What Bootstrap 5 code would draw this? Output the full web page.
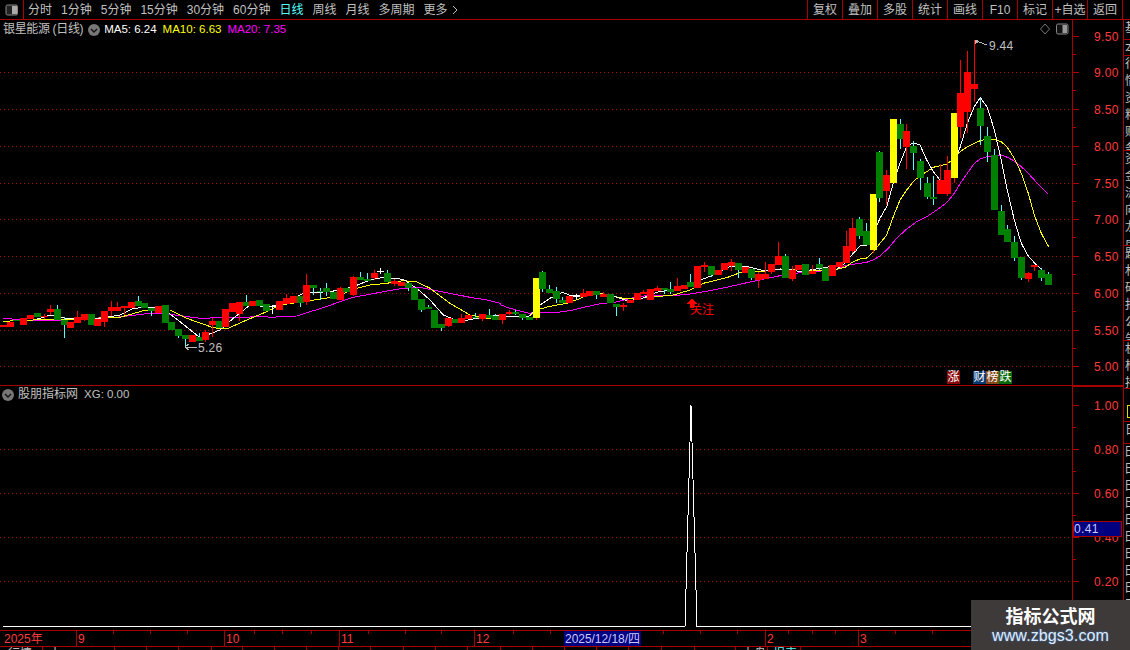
<!doctype html>
<html lang="zh">
<head>
<meta charset="utf-8">
<title>银星能源 日线</title>
<link href="https://cdn.jsdelivr.net/npm/bootstrap@5.3.0/dist/css/bootstrap.min.css" rel="stylesheet">
<style>
:root{--tdx-red:#a80000;--tdx-text:#c0c0c0;}
html,body{background:#000;}
body{width:1130px;height:650px;overflow:hidden;font:12px/1 "Liberation Sans","Noto Sans CJK SC",sans-serif;color:var(--tdx-text);}
.shell{width:1130px;height:650px;overflow:hidden;}
.topbar{height:20px;border-bottom:1px solid var(--tdx-red);flex:none;}
.win-btn{width:24px;height:19px;border-right:1px solid var(--tdx-red);flex:none;}
.tabs{padding-left:4px;gap:9px;line-height:20px;white-space:nowrap;}
.tabs span.on{color:#54ffff;}
.more-ico{margin-left:4px;vertical-align:-1px;}
.tools{margin-left:auto;line-height:20px;}
.tools span{display:block;width:35px;text-align:center;border-left:1px solid var(--tdx-red);white-space:nowrap;}
.tools span:last-child{width:36px;border-right:1px solid var(--tdx-red);}
.tools-end{width:7px;flex:none;}
.body-row{height:610px;flex:none;}
.plots{width:1072px;flex:none;}
.pane-up{height:366px;border-bottom:1px solid var(--tdx-red);flex:none;}
.pane-low{height:244px;flex:none;}
.plots svg,.axes svg,.timeline svg{display:block;}
.crisp{shape-rendering:crispEdges;}
.legend{left:3px;top:3px;gap:6px;line-height:13px;white-space:nowrap;font-size:11.5px;}
.legend .cn{font-size:12px;}
.legend .ti{letter-spacing:-.35px;margin-right:-1px;}
.legend .dot-ico{margin-right:-2px;}
.legend-low{left:2px;top:2px;gap:4px;}
.legend-low .dot-ico{margin-right:0;}
.legend-low .cn{margin-right:2px;}
.dot-ico{width:12px;height:12px;flex:none;}
.c-w{color:#fff}.c-y{color:#ff0}.c-m{color:#f0f}
.corner{right:3px;top:3px;gap:6px;}
.tagrow{left:947px;top:351px;}
.tagcell{width:13px;height:13px;line-height:13px;text-align:center;color:#fff;font-size:12px;}
.t-red{background:#8a0a0a}.t-blue{background:#0c3b72;margin-left:13px}.t-brown{background:#85491b}.t-green{background:#0a6a0a}
.axes{width:51px;flex:none;border-left:1px solid var(--tdx-red);}
.axis-up{height:366px;border-bottom:1px solid var(--tdx-red);flex:none;}
.axis-low{height:244px;border-top:2px solid var(--tdx-red);border-left:1px solid var(--tdx-red);margin-left:-1px;margin-top:-1px;flex:none;}
.side{width:7px;flex:none;border-left:1px solid var(--tdx-red);overflow:hidden;}
.side-block{overflow:hidden;border-bottom:1px solid var(--tdx-red);line-height:17px;padding-left:1px;width:14px;word-break:break-all;}
.s20{height:20px}.s6{height:6px}.s97{height:97px}.s32{height:17px}
.s49{height:49px}.s24{height:24px;border-top:1px solid var(--tdx-red)}.s190{height:190px;border:0}
.side-yel{width:12px;height:13px;border:1px solid #dd0;margin:16px 0 3px 3px;flex:none;}
.timeline{height:17px;flex:none;border-top:1px solid var(--tdx-red);border-bottom:1px solid var(--tdx-red);}
.strip{height:3px;overflow:hidden;flex:none;line-height:14px;white-space:nowrap;}
.strip span{display:block;height:3px;border-right:1px solid var(--tdx-red);flex:none;}
.w32{width:32px}.w33{width:33px}.w31{width:31px}.w41{width:41px}
.w43{width:43px;padding-left:8px}.w72{width:72px;padding-left:6px}.p5{padding-left:5px}.p6{padding-left:6px}
.cy{color:#54ffff;}
.mark-note{left:690px;top:283px;color:#f00;line-height:14px;}
.brand{right:0;bottom:0;width:159px;height:50px;background:#3f3a3a;z-index:5;}
.brand-a{font-size:18px;font-weight:700;color:#fff;line-height:22px;margin-top:6px;}
.brand-b{font-size:16px;color:#dfeaf7;line-height:18px;letter-spacing:.1px;margin-top:-1px;text-shadow:0 0 2px #3d7fd0;}
</style>
</head>
<body>
<div class="shell d-flex flex-column position-relative">
  <div class="topbar d-flex align-items-stretch">
    <div class="win-btn d-flex align-items-center justify-content-center">
      <svg width="14" height="12" viewBox="0 0 14 12"><rect x="1" y="1" width="11.5" height="10" rx="1.5" fill="#222" stroke="#888"/><rect x="7" y="2" width="5" height="8" fill="#aaa"/></svg>
    </div>
    <div class="tabs d-flex">
      <span>分时</span><span>1分钟</span><span>5分钟</span><span>15分钟</span><span>30分钟</span><span>60分钟</span><span class="on">日线</span><span>周线</span><span>月线</span><span>多周期</span><span>更多<svg class="more-ico" width="6" height="10" viewBox="0 0 6 10"><path d="M1 1l4 4-4 4" fill="none" stroke="#c0c0c0"/></svg></span>
    </div>
    <div class="tools d-flex">
      <span>复权</span><span>叠加</span><span>多股</span><span>统计</span><span>画线</span><span>F10</span><span>标记</span><span>+自选</span><span>返回</span>
    </div>
    <div class="tools-end"></div>
  </div>

  <div class="body-row d-flex">
    <div class="plots d-flex flex-column">
      <div class="pane-up position-relative">
        <svg id="up" class="crisp" width="1072" height="365"></svg>
        <div class="legend position-absolute d-flex align-items-center">
          <span class="cn ti">银星能源 (日线)</span>
          <svg class="dot-ico" viewBox="0 0 12 12"><circle cx="6" cy="6" r="6" fill="#777"/><path d="M3 5l3 3 3-3" fill="none" stroke="#111" stroke-width="1.4"/></svg>
          <span class="c-w">MA5: 6.24</span><span class="c-y">MA10: 6.63</span><span class="c-m">MA20: 7.35</span>
        </div>
        <div class="corner position-absolute d-flex align-items-center">
          <svg width="10" height="12" viewBox="0 0 10 12"><path d="M5 1l4.500 5-4.500 5-4.500-5z" fill="none" stroke="#777"/></svg>
          <svg width="13" height="12" viewBox="0 0 13 12"><rect x=".5" y="1" width="11.500" height="10" rx="1.500" fill="#111" stroke="#888"/><rect x="6.500" y="2" width="4.500" height="8" fill="#999"/></svg>
        </div>
        <div class="tagrow position-absolute d-flex">
          <div class="tagcell t-red">涨</div><div class="tagcell t-blue">财</div><div class="tagcell t-brown">榜</div><div class="tagcell t-green">跌</div>
        </div>
        <div class="mark-note position-absolute">关注</div>
      </div>
      <div class="pane-low position-relative">
        <svg id="low" class="crisp" width="1072" height="244"></svg>
        <div class="legend legend-low position-absolute d-flex align-items-center">
          <svg class="dot-ico" viewBox="0 0 12 12"><circle cx="6" cy="6" r="6" fill="#777"/><path d="M3 5l3 3 3-3" fill="none" stroke="#111" stroke-width="1.4"/></svg>
          <span class="cn">股朋指标网</span><span>XG: 0.00</span>
        </div>
      </div>
    </div>
    <div class="axes d-flex flex-column">
      <div class="axis-up"><svg id="axu" width="50" height="365"></svg></div>
      <div class="axis-low"><svg id="axl" width="50" height="242"></svg></div>
    </div>
    <div class="side d-flex flex-column">
      <div class="side-block s20">基</div>
      <div class="side-block s32">本</div>
      <div class="side-block s97">行情资料财务</div>
      <div class="side-block s97">资金流向龙虎</div>
      <div class="side-block s97">题材研报公告</div>
      <div class="side-block s49">机构持股</div>
      <div class="side-yel"></div>
      <div class="side-block s24">日</div>
      <div class="side-block s190">田田田田田田田田田田田</div>
    </div>
  </div>

  <div class="timeline"><svg id="tm" width="1130" height="15"></svg></div>
  <div class="strip d-flex">
    <span class="w43">行情</span><span class="w72">十</span>
    <span class="w32"></span><span class="w32"></span><span class="w33"></span><span class="w31"></span><span class="w32"></span><span class="w32"></span><span class="w32"></span><span class="w32"></span><span class="w33"></span><span class="w32"></span><span class="w32"></span><span class="w33"></span><span class="w32"></span><span class="w32"></span><span class="w32"></span><span class="w32"></span><span class="w33"></span><span class="w33"></span>
    <span class="w41"></span><span class="w32 p6">大盘</span><span class="w33 p5 cy">报表</span>
  </div>

  <div class="brand position-absolute text-center">
    <div class="brand-a">指标公式网</div>
    <div class="brand-b">www.zbgs3.com</div>
  </div>
</div>

<script src="https://cdn.jsdelivr.net/npm/bootstrap@5.3.0/dist/js/bootstrap.bundle.min.js"></script>
<script>
var RED='#ff0000',GRN='#008000',YEL='#ffff00',CY='#54ffff',AX='#ff3a3a',LN='#a80000';
var up='',low='',Y0=20;
function rect(x,y,w,h,c){return '<rect x="'+x+'" y="'+y+'" width="'+w+'" height="'+h+'" fill="'+c+'"/>';}
function dots(y){var s='';for(var x=0;x<1072;x+=4){s+=rect(x,y,1,1,LN);}return s;}
[72,109,146,183,219,256,293,330,366].forEach(function(y){up+=dots(y-Y0);});
var C=[];
function add(ox,oy,s){s.trim().split(/\s*;\s*/).forEach(function(r){if(!r)return;var a=r.trim().split(/\s+/);
 var t=+a[2],b=+a[3],wt=a[4]?+a[4]:t,wb=a[5]?+a[5]:b;
 C.push({x:ox+a[0]/3,c:a[1],t:oy+t/3,b:oy+b/3,wt:oy+wt/3,wb:oy+wb/3});});}
add(0,260,"10 r 196 203;31 r 186 201;50 g 181 184;70 r 175 195;91 r 165 178;112 g 159 170;133 r 168 171 162 176;151 r 148 156 135 165;172 g 147 180 135 180;193 g 180 195 170 233;211 r 186 204;232 r 171 190 153 190;253 r 162 180 162 184;274 g 162 195;292 r 177 198;313 r 153 186 153 201;335 r 141 153 124 168;353 r 141 153 126 153;374 r 138 143 138 165;394 r 126 143;415 g 123 138 108 138;433 g 129 144;455 g 144 153 144 168;475 r 138 159;497 g 135 189;515 g 186 210;536 g 207 228 207 234;557 g 225 237 225 264;578 r 226 246;598 g 231 243 220 243;616 r 216 240 210 246;637 r 183 195 174 231;657 g 183 204;677 r 147 201;697 r 129 156;718 r 126 162 126 183;739 g 126 138 105 138;757 r 123 138;778 g 120 138;799 g 132 153");
add(270,260,"7 w 139 141 137 160;28 r 123 150;49 r 114 132 102 132;70 r 108 129;91 g 108 129 108 141;110 r 75 126 42 135;130 g 75 84 75 105;151 g 94 97 84 120;170 g 84 96 69 108;190 g 96 117;211 r 84 120 81 120;230 g 84 96;250 r 51 105 48 108;271 g 51 60 36 60;292 g 57 63 39 63;313 r 39 54 30 60;332 w 33 36 24 42;352 g 39 66 30 66;373 r 63 71 56 78;394 r 66 78;415 g 69 84 69 93;433 g 84 120;454 g 117 150 117 155;475 g 141 147 135 147;494 g 150 204;515 g 192 204 192 213;536 r 174 198 174 201;555 g 177 189;574 r 174 189 162 189;595 r 165 177;616 g 171 174 160 178;637 r 162 177 162 183;657 g 165 174 147 174;677 g 168 180 162 180");
add(500,230,"7 r 252 270 252 282;28 r 246 252 240 255;46 g 246 252 240 255;67 g 252 264 252 270;88 g 261 270;109 y 144 264 144 270;127 g 126 177 123 185;148 g 177 189 165 189;169 g 183 207 171 219;187 g 210 220 201 220;208 r 198 219;229 w 198 200 192 210;250 r 189 201 177 201;268 r 183 198;289 g 183 195 183 207;310 r 192 201 186 201;331 g 192 219;349 g 222 231 222 258;370 r 225 231 219 243;391 r 210 219;412 r 189 210;431 r 186 192 180 192;451 r 177 210;472 r 174 183 168 183;493 g 174 180 174 192;511 g 177 186 156 192;532 r 168 183 144 183;553 r 165 177;572 g 156 171 132 171;592 r 108 174;613 r 105 111 96 126;634 g 108 135 108 141;655 r 120 135;673 r 99 120;694 r 96 108 87 123;715 g 99 120 99 144;736 r 111 129;755 g 117 144 117 150;776 r 132 150 126 174;797 r 132 147 96 147;815 r 102 126 102 132;836 r 78 105 36 105;856 g 78 144 72 144;877 r 120 147 108 153;895 r 105 120;916 g 102 135;937 r 123 132 105 132;958 g 102 114 84 120;977 g 114 153");
add(830,30,"8 r 705 738;28 r 696 711;49 r 648 699 603 699;67 r 594 663 564 669;88 g 567 618 561 627;109 g 603 645 579 645;130 y 492 660 492 669;148 g 366 504 363 516;169 r 435 483 420 525;190 y 267 459;211 g 282 327 267 357;229 r 303 351 282 417;250 g 348 369 333 420;271 g 393 444 387 480;292 g 459 501 441 507;310 g 501 507 438 525;331 r 450 492 402 492;352 r 420 492 378 498;373 y 249 444 249 459;391 r 189 291 90 324;412 r 126 246 63 309;433 r 162 177 30 216;451 g 234 288 204 345;472 g 318 366 291 396;493 g 375 540 357 540;514 g 543 615 525 615;532 g 597 636 585 636;553 g 636 684 618 693;574 g 681 744 681 750;595 r 729 747 726 756;613 r 705 711 705 723;634 g 720 744 714 753;655 g 732 765 726 765");
function pts(ox,oy,s){return s.trim().split(/\s+/).map(function(p){var a=p.split(',');return (ox+a[0]/3).toFixed(1)+','+(oy+a[1]/3-Y0).toFixed(1);}).join(' ');}
var mag=[pts(0,260,"10,175 100,182 200,180 270,175 350,172 450,160 510,163 600,175 700,172 800,170"),
 pts(270,260,"0,172 40,170 80,168 110,158 160,143 210,125 250,112 300,103 350,93 400,85 450,82 500,92 550,102 600,112 650,120 690,130"),
 pts(500,230,"0,224 30,235 60,243 88,250 109,247 175,247 215,241 260,230 300,221 345,217 400,203 445,196 530,196 570,192 620,184 680,172 750,156 840,137 900,128 990,121"),
 pts(830,30,"20,718 45,707 70,703 110,697 130,690 150,678 175,655 200,625 230,597 260,575 290,560 320,540 350,518 373,490 391,460 412,430 433,400 451,387 472,380 493,377 514,375 532,382 553,393 574,410 595,430 613,450 634,472 653,491")].join(' ');
var yel=[pts(0,260,"10,184 100,180 200,178 270,175 360,172 430,152 510,150 560,175 640,203 680,207 740,180 800,155"),
 pts(270,260,"0,150 30,135 100,125 150,117 200,110 250,88 300,75 350,70 400,62 440,65 480,85 540,130 600,165 650,175 690,172"),
 pts(500,230,"0,258 88,258 109,240 150,229 200,220 240,206 270,190 300,190 345,200 370,205 420,205 470,200 520,195 570,180 610,160 680,143 720,128 780,125 840,117 900,118 950,122 990,119"),
 pts(830,30,"20,718 45,712 70,695 90,687 110,684 130,665 150,640 170,615 190,560 210,510 230,480 250,455 270,437 290,425 310,412 330,407 350,403 373,385 391,365 412,350 433,340 451,332 472,327 493,328 514,335 532,352 553,385 574,430 595,490 613,555 634,610 656,650")].join(' ');
var wht=[pts(0,260,"110,178 150,165 200,175 300,175 360,165 400,145 480,140 540,185 600,233 660,210 700,175 750,135 800,140"),
 pts(270,260,"0,140 50,125 100,100 150,97 200,92 250,80 300,60 340,52 400,58 440,85 480,120 520,165 570,185 620,175 690,165"),
 pts(500,230,"0,258 88,258 120,225 150,205 187,187 215,198 250,195 290,190 345,200 380,212 420,208 470,187 510,180 560,172 590,155 640,135 690,110 735,108 790,122 860,117 900,125 990,110"),
 pts(830,30,"20,718 45,700 70,670 90,648 110,645 130,610 150,565 170,530 190,460 210,400 230,350 250,338 270,345 290,390 310,425 330,450 350,455 373,400 391,350 412,280 433,230 451,203 472,232 493,300 514,390 532,480 553,570 574,640 595,678 613,698 634,718")].join(' ');
function poly(p,c){return '<polyline points="'+p+'" fill="none" stroke="'+c+'"/>';}
up+=poly(mag,'#ff00ff')+poly(yel,YEL)+poly(wht,'#ffffff');
C.forEach(function(k){
 var cx=Math.round(k.x-.5), body=k.c=='r'?RED:k.c=='g'?GRN:k.c=='y'?YEL:'#ffffff';
 var wick=k.c=='g'?CY:k.c=='w'?'#ffffff':RED;
 up+=rect(cx,Math.round(k.wt)-Y0,1,Math.max(1,Math.round(k.wb-k.wt)),wick);
 up+=rect(cx-3,Math.round(k.t)-Y0,7,Math.max(1,Math.round(k.b-k.t)),body);
});
up+='<polyline points="987,25 979,22 975,21 975,24" fill="none" stroke="#b8b8b8"/>'+
 '<path d="M975 21h4M975 21l3 -1M975 21l3 2" stroke="#b8b8b8"/>'+
 '<text x="989" y="30" fill="#c0c0c0" font-size="12" style="letter-spacing:.3px">9.44</text>';
up+='<path d="M185 327H197M185 327l4 -3M185 327l4 3" stroke="#b8b8b8" fill="none"/>'+
 '<text x="198" y="332" fill="#c0c0c0" font-size="12" style="letter-spacing:.3px">5.26</text>';
up+='<path d="M692 278l5 6h-3v4h-4v-4h-3z" fill="#f00"/>';
document.getElementById('up').innerHTML=up;
var LY=386;
[449,493,537,581].forEach(function(y){low+=dots(y-LY);});
low+='<polyline points="3,240 685,240 691,19 697,240 971,240" fill="none" stroke="#fff"/>';
document.getElementById('low').innerHTML=low;
function axis(el,vals,tickStep,y0,lastMinor){var s='';
 vals.forEach(function(v,i){var y=v[1]-y0;
  s+='<rect x="0" y="'+y+'" width="6" height="1" fill="'+LN+'"/>';
  s+='<text x="21" y="'+(y+5)+'" fill="'+AX+'" font-size="12" style="letter-spacing:.35px">'+v[0]+'</text>';
  if(i<vals.length-1||lastMinor){s+='<rect x="0" y="'+Math.round(y+tickStep/2)+'" width="3" height="1" fill="'+LN+'"/>';}
 });
 document.getElementById(el).innerHTML=s;}
axis('axu',[['9.50',36],['9.00',72],['8.50',109],['8.00',146],['7.50',183],['7.00',219],['6.50',256],['6.00',293],['5.50',330],['5.00',366]],36.7,20,false);
axis('axl',[['1.00',405],['0.80',449],['0.60',493],['0.40',537],['0.20',581]],44,387,true);
document.getElementById('axl').innerHTML+='<rect x=".5" y="134.500" width="48" height="15" fill="#000080" stroke="'+LN+'"/><text x="1" y="146" fill="#c8c8ff" font-size="12" style="letter-spacing:.35px">0.41</text>';
var t='';
[113,150,187,254,282,311,368,405,441,513,550,663,700,737,788,812,835,895,932].forEach(function(x){t+=rect(x,0,1,3,LN);});
[76,224,339,474,765,858].forEach(function(x){t+=rect(x,0,1,15,LN);});
[['2025年',4],['9',78],['10',226],['11',341],['12',476],['2',767],['3',860]].forEach(function(a){t+='<text x="'+a[1]+'" y="12" fill="'+AX+'" font-size="12">'+a[0]+'</text>';});
t+='<rect x="564" y="0" width="77" height="15" fill="#000080"/><text x="565" y="12" fill="#c8c8ff" font-size="12" textLength="75">2025/12/18/四</text>';
document.getElementById('tm').innerHTML=t;
</script>
</body>
</html>
